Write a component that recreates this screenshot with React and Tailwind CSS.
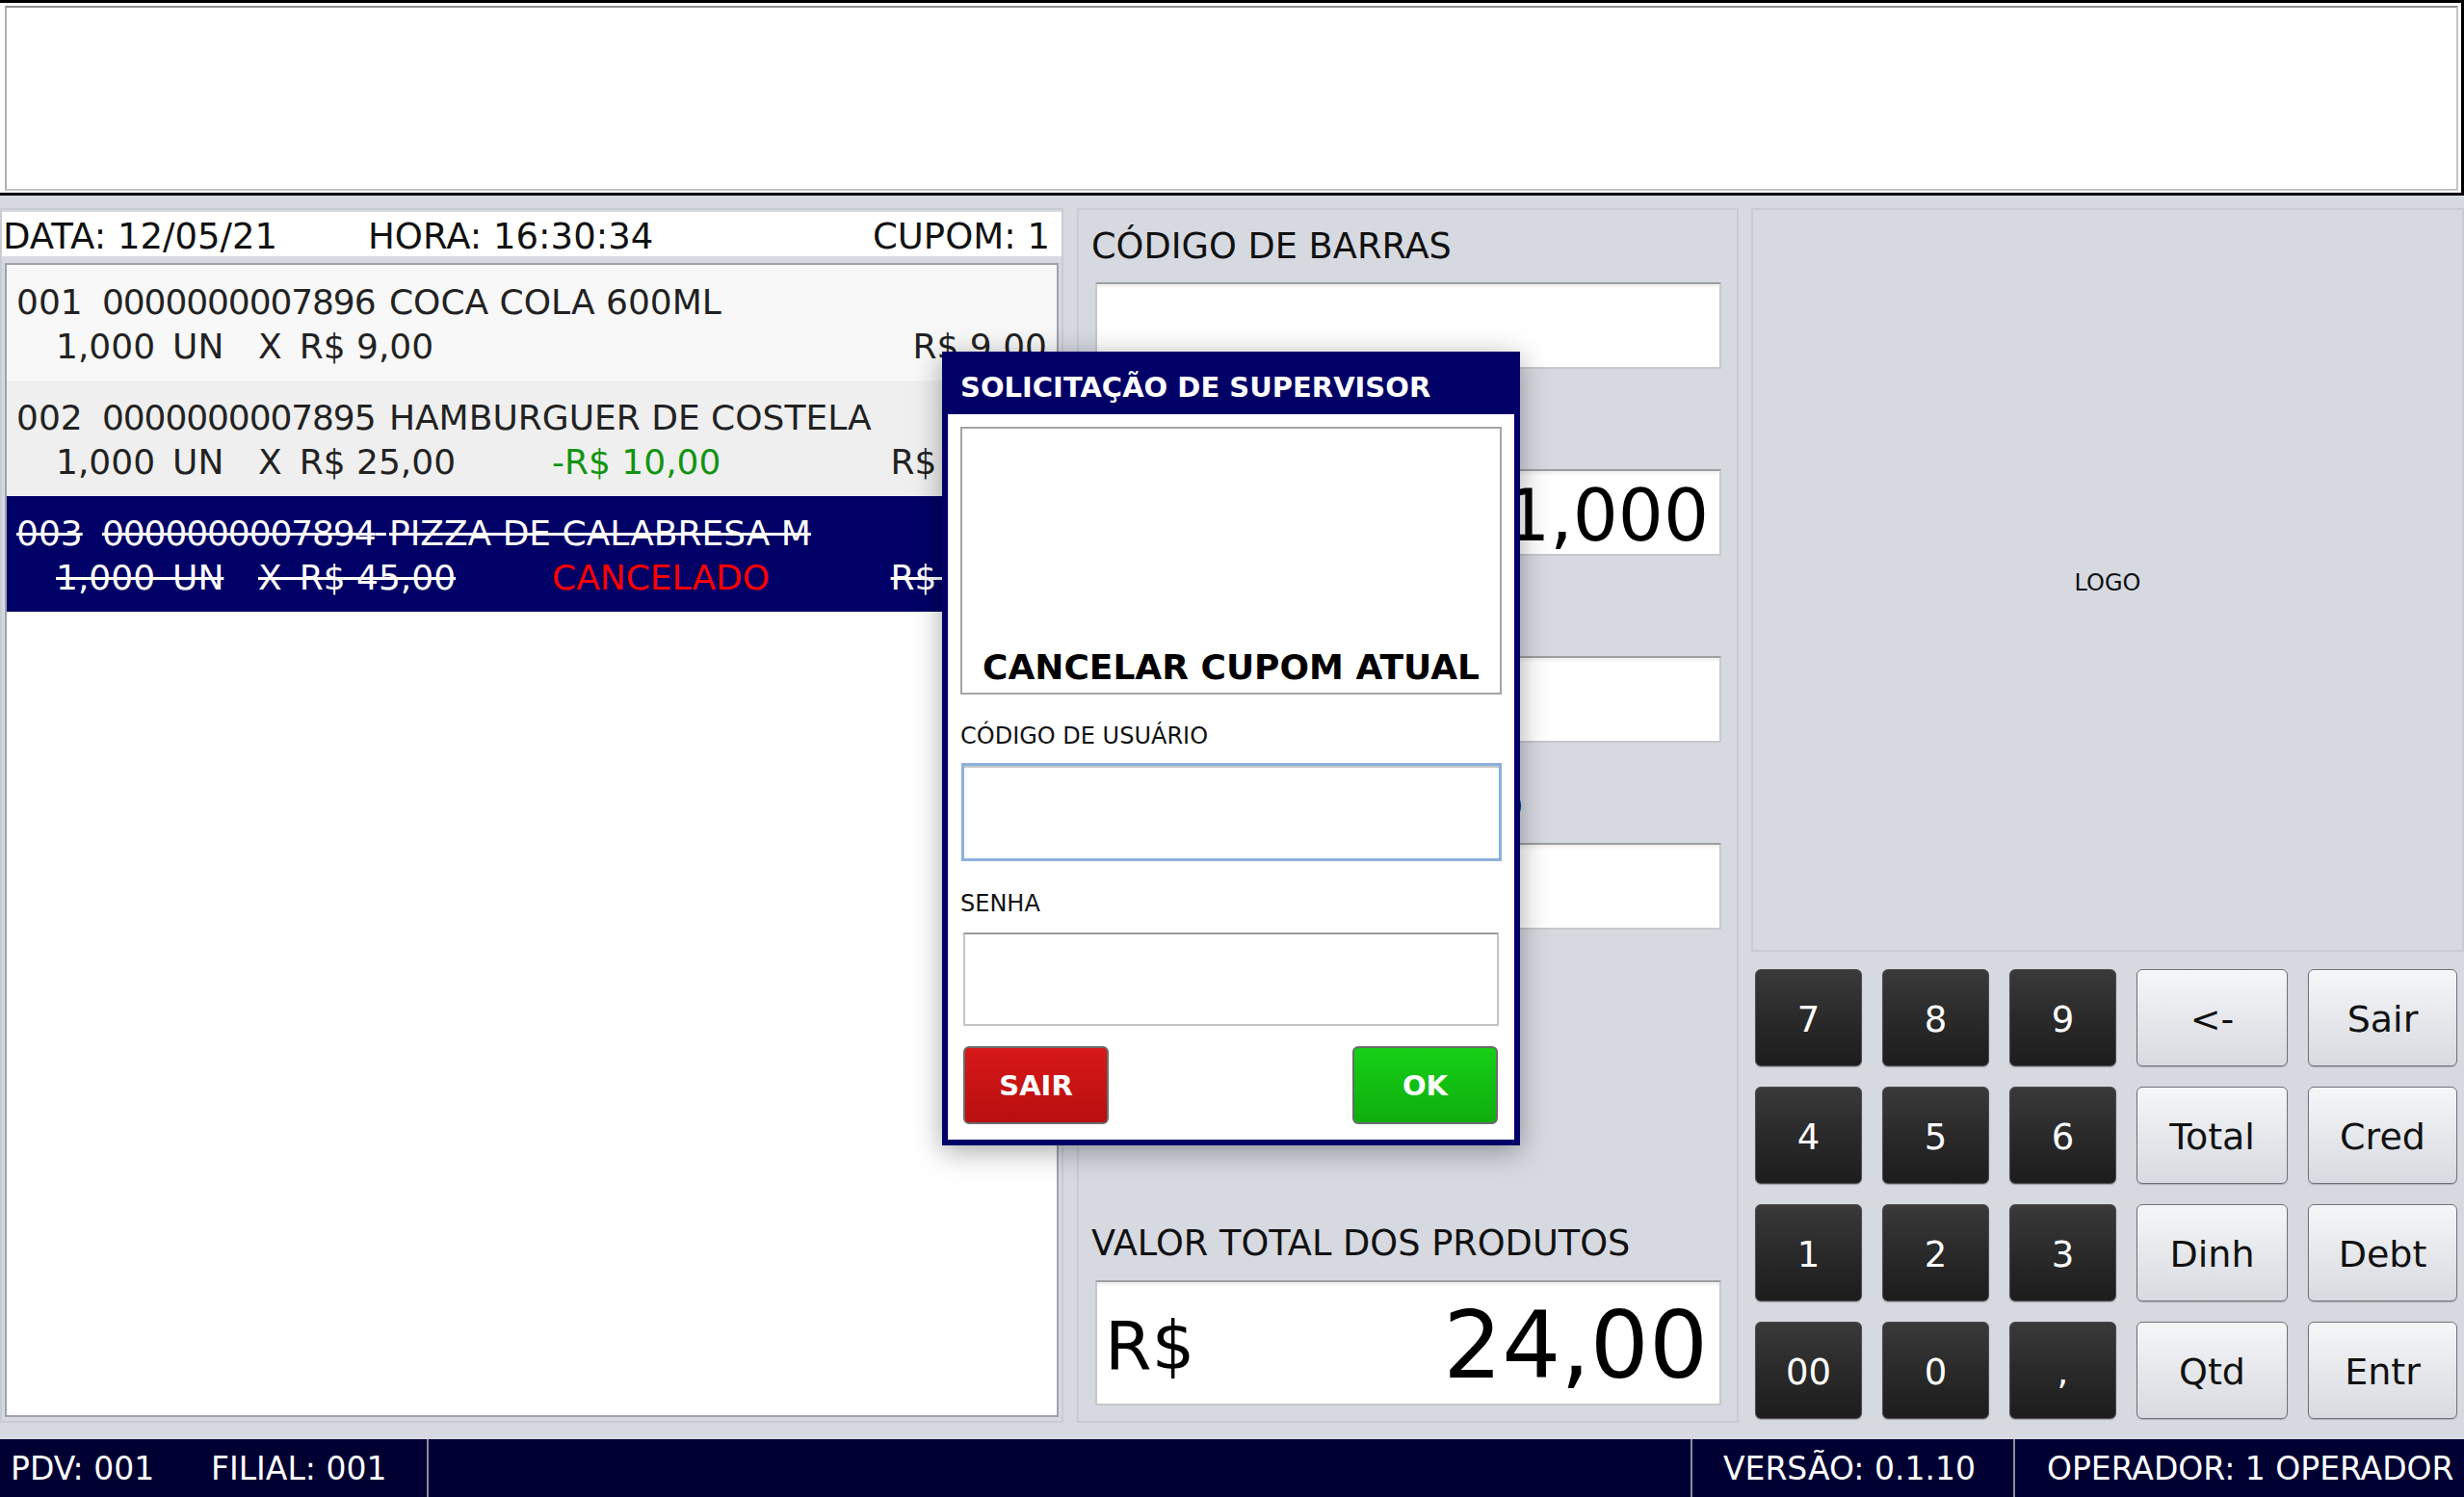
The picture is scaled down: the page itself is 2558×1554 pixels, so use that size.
import React from "react";

const dark = "flex items-center justify-center pt-[4px] rounded-[6px] border border-[#4d4d4d] bg-linear-to-b from-[#3a3a3a] via-[#2a2a2a] to-[#1d1d1d] text-white text-[37px] shadow-[0_1px_1px_rgba(0,0,0,0.25)]";
const light = "flex items-center justify-center pt-[4px] rounded-[6px] border border-[#707278] bg-linear-to-b from-[#f5f6f8] to-[#d7dae0] text-[#111] text-[38px] shadow-[0_1px_1px_rgba(0,0,0,0.2)]";
const field = "bg-white border-2 border-[#c6c8cc] border-t-[#9c9ea2] shadow-[inset_0_3px_3px_rgba(0,0,0,0.06)]";

function Key({ children, d }) {
  return <div className={d ? dark : light}>{children}</div>;
}

function Label({ children, className = "" }) {
  return (
    <div className={"h-[42px] leading-[42px] text-[36.7px] text-[#111] whitespace-nowrap pl-[13px] " + className}>
      {children}
    </div>
  );
}

function Row({ bg, num, code, name, qty, price, extra, extraClass, total, cancelled }) {
  const s = cancelled ? "line-through" : "";
  return (
    <div className={"h-[120px] pt-[16px] px-[10px] text-[36px] leading-[46px] whitespace-pre " + bg + (cancelled ? " text-white" : " text-[#222]")}>
      <div className="flex">
        <span className="w-[89px]"><span className={s}>{num}</span></span>
        <span className={s}>
          <span className="tracking-[-1.1px]">{code}</span>
          <span> </span>
          <span className="ml-[3px]">{name}</span>
        </span>
      </div>
      <div className="flex pl-[41px]">
        <span className="w-[210px]"><span className={s}>{qty + "\u2002UN"}</span></span>
        <span className="w-[305px]"><span className={s}>{"X\u2002R$ " + price}</span></span>
        {extra ? <span className={extraClass}>{extra}</span> : null}
        <span className={"ml-auto " + s}>{"R$ " + total}</span>
      </div>
    </div>
  );
}

export default function App() {
  return (
    <div className="relative w-[2558px] h-[1554px] overflow-hidden bg-[#d6d9e0] flex flex-col font-['DejaVu_Sans',sans-serif]">
      {/* top display */}
      <div className="h-[203px] shrink-0 bg-white border-t-[3px] border-r-[3px] border-b-[3px] border-black pt-[3px] pl-[5px] pr-[3px] pb-[2px]">
        <div className="h-full bg-white border-2 border-[#c4c4c4] border-t-[#8e8e8e] border-l-[#b0b0b0]" />
      </div>

      {/* panels */}
      <div className="mt-[13px] h-[1261px] shrink-0 flex">
        {/* left list panel */}
        <div className="w-[1104px] h-full border-2 border-[#c8cbd2] flex flex-col pt-[2px]">
          <div className="h-[46px] bg-white flex text-[37px] leading-[51px] text-[#111] whitespace-pre overflow-hidden">
            <span className="w-[380px] pl-[1px]">DATA: 12/05/21</span>
            <span>HORA: 16:30:34</span>
            <span className="ml-auto pr-[12px]">CUPOM: 1</span>
          </div>
          <div className="mt-[7px] mx-[3px] mb-[4px] flex-1 bg-white border-2 border-[#9ea2ac] overflow-hidden">
            <Row bg="bg-[#f8f8f8]" num="001" code="0000000007896" name="COCA COLA 600ML" qty="1,000" price="9,00" total="9,00" />
            <Row bg="bg-[#efefef]" num="002" code="0000000007895" name="HAMBURGUER DE COSTELA" qty="1,000" price="25,00" extra="-R$ 10,00" extraClass="text-[#129412]" total="15,00" />
            <Row bg="bg-[#000066]" num="003" code="0000000007894" name="PIZZA DE CALABRESA M" qty="1,000" price="45,00" extra="CANCELADO" extraClass="text-[#ff0000]" total="45,00" cancelled />
          </div>
        </div>

        {/* middle panel */}
        <div className="ml-[14px] w-[687px] h-full border-2 border-[#c8cbd2] flex flex-col pt-[17px] pb-[16px]">
          <Label>CÓDIGO DE BARRAS</Label>
          <div className={"mt-[16px] ml-[17px] mr-[16px] h-[90px] " + field} />
          <Label className="mt-[46px]">QUANTIDADE</Label>
          <div className={"mt-[16px] ml-[17px] mr-[16px] h-[90px] flex items-center justify-end pr-[11px] pt-[6px] text-[74px] leading-none text-black " + field}>
            1,000
          </div>
          <Label className="mt-[46px]">VALOR UNITÁRIO</Label>
          <div className={"mt-[16px] ml-[17px] mr-[16px] h-[90px] " + field} />
          <Label className="mt-[46px] tracking-[-0.4px]">SUBTOTAL DO PRODUTO</Label>
          <div className={"mt-[16px] ml-[17px] mr-[16px] h-[90px] " + field} />

          <div className="mt-auto">
            <Label>VALOR TOTAL DOS PRODUTOS</Label>
            <div className={"mt-[17px] ml-[17px] mr-[16px] h-[130px] flex items-center justify-between pl-[8px] pr-[12px] pt-[6px] text-black leading-none " + field}>
              <span className="text-[70px]">R$</span>
              <span className="text-[96px]">24,00</span>
            </div>
          </div>
        </div>

        {/* right panel */}
        <div className="ml-[13px] flex-1 h-full flex flex-col">
          <div className="h-[772px] border-2 border-[#c8cbd2] flex items-center justify-center pt-[6px] text-[24px] text-[#111]">
            LOGO
          </div>
          <div className="mt-[18px] pl-[4px] grid grid-cols-[111px_111px_111px_157px_155px] grid-rows-[101px_101px_101px_101px] gap-x-[21px] gap-y-[21px]">
            <Key d>7</Key>
            <Key d>8</Key>
            <Key d>9</Key>
            <Key>{"<-"}</Key>
            <Key>Sair</Key>
            <Key d>4</Key>
            <Key d>5</Key>
            <Key d>6</Key>
            <Key>Total</Key>
            <Key>Cred</Key>
            <Key d>1</Key>
            <Key d>2</Key>
            <Key d>3</Key>
            <Key>Dinh</Key>
            <Key>Debt</Key>
            <Key d>00</Key>
            <Key d>0</Key>
            <Key d>,</Key>
            <Key>Qtd</Key>
            <Key>Entr</Key>
          </div>
        </div>
      </div>

      {/* status bar */}
      <div className="mt-[17px] h-[60px] shrink-0 bg-[#000033] flex items-stretch text-white text-[33px] whitespace-pre">
        <div className="w-[443px] flex items-center pl-[11px] pt-[2px]">
          <span className="w-[208px]">PDV: 001</span>
          <span>FILIAL: 001</span>
        </div>
        <div className="w-[2px] bg-[#8a8a98]" />
        <div className="flex-1" />
        <div className="w-[2px] bg-[#8a8a98]" />
        <div className="w-[333px] flex items-center pl-[32px] pt-[2px]">VERSÃO: 0.1.10</div>
        <div className="w-[2px] bg-[#8a8a98]" />
        <div className="w-[466px] flex items-center pl-[33px] pt-[2px]">OPERADOR: 1 OPERADOR</div>
      </div>

      {/* supervisor dialog */}
      <div className="absolute left-[978px] top-[365px] w-[600px] bg-[#000066] px-[6px] pb-[6px] flex flex-col shadow-[0_6px_28px_rgba(0,0,0,0.35)]">
        <div className="h-[65px] flex items-center pl-[13px] pt-[10px] text-[29px] font-bold text-white leading-none whitespace-nowrap">
          SOLICITAÇÃO DE SUPERVISOR
        </div>
        <div className="bg-white flex flex-col px-[13px] pt-[13px] pb-[16px]">
          <div className="h-[278px] border-2 border-[#a4a4a4] flex items-end justify-center pb-[5px]">
            <span className="text-[36px] leading-[42px] font-bold text-black whitespace-nowrap">CANCELAR CUPOM ATUAL</span>
          </div>
          <div className="mt-[29px] h-[28px] leading-[28px] text-[24px] text-[#111]">CÓDIGO DE USUÁRIO</div>
          <div className="mt-[14px] ml-[1px] h-[102px] bg-white border-[3px] border-[#8cb0de] shadow-[inset_0_2px_0_#c6c6c6]" />
          <div className="mt-[30px] h-[28px] leading-[28px] text-[24px] text-[#111]">SENHA</div>
          <div className="mt-[16px] mx-[3px] h-[97px] bg-white border-2 border-[#c4c4c4] border-t-[#9a9a9a]" />
          <div className="mt-[21px] h-[81px] flex justify-between pl-[3px] pr-[4px]">
            <div className="w-[151px] rounded-[6px] border-2 border-[#6b6b6b] bg-linear-to-b from-[#d81818] to-[#b80f0f] flex items-center justify-center text-white font-bold text-[29px] pt-[2px]">
              SAIR
            </div>
            <div className="w-[151px] rounded-[6px] border-2 border-[#6b6b6b] bg-linear-to-b from-[#16d016] to-[#0fae0f] flex items-center justify-center text-white font-bold text-[29px] pt-[2px]">
              OK
            </div>
          </div>
        </div>
      </div>
    </div>
  );
}
